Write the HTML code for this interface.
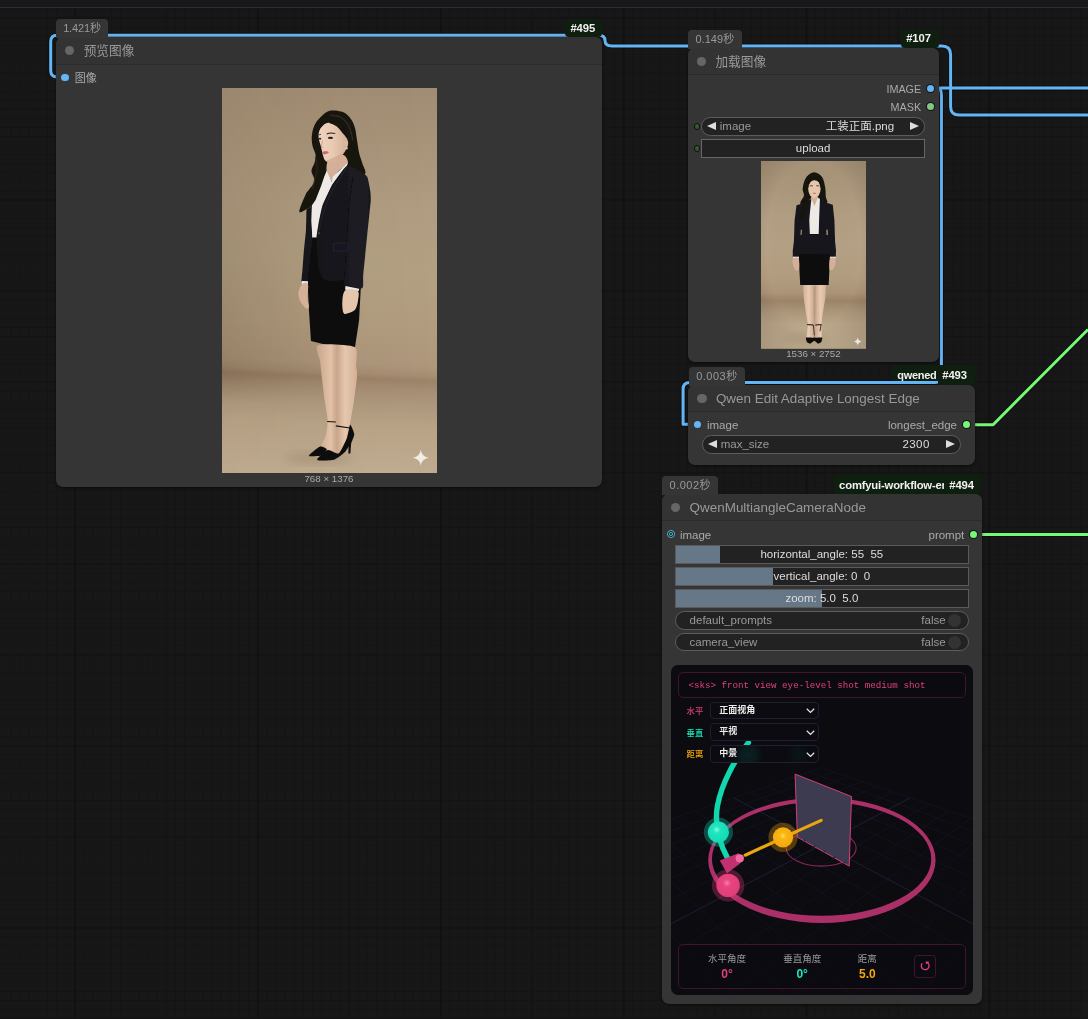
<!DOCTYPE html>
<html lang="zh-CN">
<head>
<meta charset="utf-8">
<title>ComfyUI</title>
<style>
*{box-sizing:border-box;margin:0;padding:0}
html,body{width:1088px;height:1019px;overflow:hidden;background:#171717}
body{position:relative;will-change:transform;font-family:"Liberation Sans","Noto Sans CJK SC",sans-serif;color:#aaa;-webkit-font-smoothing:antialiased}
#topbar{position:absolute;left:0;top:0;width:1088px;height:8px;background:#18181a;border-bottom:1px solid #2c2c31;z-index:50}
#grid{position:absolute;left:0;top:8px;width:1088px;height:1011px;
 background-color:#171717;
 background-image:
  linear-gradient(to right,#111 0,#111 1.8px,transparent 1.8px),
  linear-gradient(to right,#141414 0,#141414 1.6px,transparent 1.6px),
  linear-gradient(to bottom,#131313 0,#131313 1.6px,transparent 1.6px),
  linear-gradient(to right,#141414 0,#141414 1px,transparent 1px),
  linear-gradient(to bottom,#141414 0,#141414 1px,transparent 1px);
 background-size:182.9px 182px,182.9px 182px,91px 91px,9.145px 9.1px,9.145px 9.1px;
 background-position:74px 8.7px,165.45px 8.7px,74px 8.7px,74.4px 9.9px,74.4px 9.9px}
#links{position:absolute;left:0;top:0;width:1088px;height:1019px;z-index:1}
.node{position:absolute;background:#353535;border-radius:7px;z-index:2;box-shadow:0 1px 3px rgba(0,0,0,.55)}
.node .title{position:absolute;left:0;top:0;right:0;height:27.4px;background:#333;border-radius:7px 7px 0 0;border-bottom:1px solid #2b2b2b}
.node .tdot{position:absolute;left:9.1px;top:9px;width:9.1px;height:9.1px;border-radius:50%;background:#666}
.node .ttext{position:absolute;left:27.5px;top:0;height:27px;line-height:28.6px;font-size:12.7px;color:#999;white-space:nowrap}
.badge{position:absolute;height:18.1px;line-height:17.4px;font-size:11px;white-space:nowrap;z-index:3}
.badge.time{background:#353535;color:#999;line-height:19.4px;border-radius:4px 4px 0 0;padding:0 7px}
.badge.id{background:#0f1f0f;color:#f0f0f0;font-weight:bold;border-radius:4px;padding:0 5px;text-align:center;font-size:11.3px;letter-spacing:-.1px;line-height:19.6px}
.slot{position:absolute;font-size:11.5px;line-height:14px;height:14px;color:#aaa;white-space:nowrap}
.dot{position:absolute;width:7.4px;height:7.4px;border-radius:50%}
.dot.o{width:7px;height:7px;margin:.2px 0 0 .2px}
.dot.o{box-shadow:0 0 0 1px #151515}
.w{position:absolute;height:18.7px;background:#222;border:1px solid #5c5c5c;font-size:11.5px;line-height:16px;color:#ddd;white-space:nowrap}
.w.pill{border-radius:9.4px}
.w .l{position:absolute;left:17.5px;top:0;color:#999}
.w .v{position:absolute;right:30px;top:0;color:#ddd}
.w .al,.w .ar{position:absolute;top:3.75px;width:0;height:0;border-top:4.6px solid transparent;border-bottom:4.6px solid transparent}
.w .al{left:4.6px;border-right:9px solid #ddd}
.w .ar{right:4.9px;border-left:9px solid #ddd}
.cap{position:absolute;font-size:9.75px;margin-top:-.7px;color:#aaa;text-align:center;white-space:nowrap;line-height:11px}

.wdot{position:absolute;left:5.85px;width:6.6px;height:6.6px;border-radius:50%;border:1px solid #0d0f0d;background:#2e5e2e}
.w.btn{border-color:#666;border-radius:0}
.w.sl{border-radius:0;border-color:#5a5a5a;text-align:center;overflow:hidden}
.w.sl .fill{position:absolute;left:0;top:0;bottom:0;background:#678;}
.w.sl .c{position:relative}
.w.tg .l{left:13.5px}
.w.tg .v{right:22px;color:#999}
.w.tg .knob{position:absolute;right:6.3px;top:1.85px;width:13px;height:13px;border-radius:50%;background:#333}
.ring{position:absolute;width:8.6px;height:8.6px;border-radius:50%;border:1.25px solid #5ab4e2;background:radial-gradient(circle,#2c4a12 0,#2c4a12 .7px,#4c9fb0 1.1px,#4c9fb0 1.9px,#0e1114 2.3px,#0e1114 3.2px)}

.pbox{position:absolute;border:1px solid #41152c;border-radius:5px;background:rgba(12,10,16,.6);font-family:"Liberation Mono","DejaVu Sans Mono",monospace;font-size:9.2px;color:#e0407f;line-height:26px;white-space:nowrap}
.pbox span{position:absolute;left:9px;top:0}
.slab{position:absolute;font-size:8.4px;line-height:15px;font-weight:500;white-space:nowrap}
.ssel{position:absolute;width:109.1px;height:17.7px;border:1px solid #1f1f31;border-radius:4px;background:#0b0b11;overflow:hidden}
.ssel b{position:absolute;left:8.6px;top:0;font-size:9px;line-height:15.5px;color:#ececec;white-space:nowrap}
.ibox{position:absolute;border:1px solid #41152c;border-radius:5px;background:rgba(11,11,16,.75)}
.icol{position:absolute;top:0;width:60px;text-align:center}
.icol .il{position:absolute;left:0;right:0;top:7.7px;font-size:9.5px;line-height:12px;color:#999;white-space:nowrap}
.icol .iv{position:absolute;left:0;right:0;top:21.5px;font-size:12px;line-height:14px;font-weight:bold;white-space:nowrap}
.rbtn{position:absolute;width:22px;height:22.4px;border:1.2px solid #41162d;border-radius:3.5px;background:#0b0a10}
.rbtn svg{position:absolute}
.ttext.lat{font-size:13.45px}
.slot.up{font-size:10.8px}
.w .v.num{letter-spacing:.4px}
.slot.cjk{font-size:11px}
</style>
</head>
<body>
<div id="grid"></div>
<div id="topbar"></div>
<svg id="links" width="1088" height="1019" viewBox="0 0 1088 1019" fill="none" stroke-linejoin="round">
<path d="M57 76.9 Q50.7 76.9 50.7 70.5 V41.5 Q50.7 35.2 57 35.2 H599 Q605 35.2 605 40.5 Q605 45.9 612 45.9 H942 Q950.6 45.9 950.6 54.5 V106.5 Q950.6 115 959 115 H1088" stroke="#0c0c0c" stroke-opacity=".6" stroke-width="5"/>
<path d="M938.8 88.1 H1088" stroke="#0c0c0c" stroke-opacity=".6" stroke-width="5"/>
<path d="M938.8 88.1 Q941.4 89 941.4 96 V376 Q941.4 382.5 935 382.5 H690 Q683.1 382.5 683.1 389 V424.3 H689" stroke="#0c0c0c" stroke-opacity=".6" stroke-width="5"/>
<path d="M975 424.7 H993.1 L1088 329.5" stroke="#0c0c0c" stroke-opacity=".6" stroke-width="5"/>
<path d="M981.5 534.4 H1088" stroke="#0c0c0c" stroke-opacity=".6" stroke-width="5"/>
<path d="M57 76.9 Q50.7 76.9 50.7 70.5 V41.5 Q50.7 35.2 57 35.2 H599 Q605 35.2 605 40.5 Q605 45.9 612 45.9 H942 Q950.6 45.9 950.6 54.5 V106.5 Q950.6 115 959 115 H1088" stroke="#64B5F6" stroke-width="3"/>
<path d="M938.8 88.1 H1088" stroke="#64B5F6" stroke-width="3"/>
<path d="M938.8 88.1 Q941.4 89 941.4 96 V376 Q941.4 382.5 935 382.5 H690 Q683.1 382.5 683.1 389 V424.3 H689" stroke="#64B5F6" stroke-width="3"/>
<path d="M975 424.7 H993.1 L1088 329.5" stroke="#77f777" stroke-width="3"/>
<path d="M981.5 534.4 H1088" stroke="#77f777" stroke-width="3"/>
</svg>

<!-- ===== Node #495 预览图像 ===== -->
<div class="badge time" style="left:56.2px;top:19.2px;width:51.6px;height:19px;padding:0;text-align:center;letter-spacing:-.15px">1.421秒</div>
<div class="badge id" style="left:564.8px;top:18.6px;width:37.5px;padding:0 1.6px 0 0">#495</div>
<div class="node" id="n495" style="left:56.2px;top:37.2px;width:546.1px;height:449.7px">
  <div class="title"><span class="tdot"></span><span class="ttext">预览图像</span></div>
  <span class="dot" style="left:5.1px;top:36.5px;background:#64B5F6"></span>
  <span class="slot cjk" style="left:18.6px;top:33.9px">图像</span>
  <div class="photo" style="position:absolute;left:165.7px;top:50.6px;width:215.4px;height:385.3px"><svg width="215.4" height="385.3" viewBox="222 88 215 385" preserveAspectRatio="none" style="display:block;position:absolute;left:0;top:0">
<defs>
<linearGradient id="b1w" gradientUnits="userSpaceOnUse" x1="329.5" y1="88" x2="312.3" y2="473">
<stop offset="0" stop-color="#a18d73"/><stop offset=".3" stop-color="#b09c80"/><stop offset=".45" stop-color="#b3a083"/><stop offset=".62" stop-color="#b29c7f"/><stop offset=".71" stop-color="#ae977b"/><stop offset=".735" stop-color="#a68e73"/><stop offset=".748" stop-color="#9d8368"/><stop offset=".765" stop-color="#a38b70"/><stop offset=".8" stop-color="#ab957a"/><stop offset=".87" stop-color="#b8a387"/><stop offset="1" stop-color="#c0ac90"/>
</linearGradient>
<linearGradient id="b1h" x1="0" y1="0" x2="1" y2="0">
<stop offset="0" stop-color="#1a0f00" stop-opacity="1"/><stop offset=".6" stop-color="#1a0f00" stop-opacity=".12"/><stop offset="1" stop-color="#1a0f00" stop-opacity="0"/>
</linearGradient>
<linearGradient id="b1m" x1="0" y1="0" x2="0" y2="1">
<stop offset="0" stop-color="#fff" stop-opacity=".05"/><stop offset=".45" stop-color="#fff" stop-opacity=".12"/><stop offset=".7" stop-color="#fff" stop-opacity=".15"/><stop offset=".75" stop-color="#fff" stop-opacity=".16"/><stop offset=".82" stop-color="#fff" stop-opacity=".03"/><stop offset="1" stop-color="#fff" stop-opacity=".02"/>
</linearGradient>
<mask id="m1" maskUnits="userSpaceOnUse" x="222" y="88" width="215" height="385"><rect x="222" y="88" width="215" height="385" fill="url(#b1m)"/></mask>
<linearGradient id="face1" x1="0" y1="0" x2="1" y2="0"><stop offset="0" stop-color="#f0d4c0"/><stop offset=".5" stop-color="#e8c8b0"/><stop offset="1" stop-color="#d4ae96"/></linearGradient>
<linearGradient id="blz1" x1="0" y1="0" x2="1" y2="0"><stop offset="0" stop-color="#131318"/><stop offset=".55" stop-color="#19191f"/><stop offset=".9" stop-color="#1e1e25"/><stop offset="1" stop-color="#16161b"/></linearGradient>
<filter id="f1" x="-5%" y="-5%" width="110%" height="110%"><feGaussianBlur stdDeviation=".45"/></filter>
<filter id="f1b" x="-20%" y="-20%" width="140%" height="140%"><feGaussianBlur stdDeviation="5"/></filter>
<linearGradient id="leg1" x1="0" y1="0" x2="1" y2="0"><stop offset="0" stop-color="#c9a58b"/><stop offset=".35" stop-color="#e2c2a8"/><stop offset=".5" stop-color="#c8a48a"/><stop offset=".7" stop-color="#e6c8af"/><stop offset="1" stop-color="#d2b096"/></linearGradient>
</defs>
<rect x="222" y="88" width="215" height="385" fill="url(#b1w)"/>
<rect x="222" y="88" width="215" height="385" fill="url(#b1h)" mask="url(#m1)"/>
<ellipse cx="318" cy="458" rx="34" ry="6" fill="#5a4530" opacity=".16" filter="url(#f1b)"/>
<g filter="url(#f1)">
<path d="M330.5 110.6 C333.9 110.1 339.3 110.7 342.7 112.1 C346.0 113.6 348.7 116.5 350.8 119.2 C352.8 121.9 353.8 124.8 354.8 128.3 C355.8 131.9 356.1 136.4 356.8 140.4 C357.5 144.5 358.0 148.9 358.8 152.6 C359.7 156.3 360.9 159.2 361.9 162.7 C362.9 166.2 366.4 171.5 364.9 173.8 C363.4 176.2 361.5 171.6 352.8 176.8 C344.0 182.1 320.1 199.8 312.3 205.2 C304.6 210.6 308.5 208.2 306.3 209.2 C304.1 210.3 299.4 213.8 299.2 211.4 C299.0 209.1 303.6 198.8 305.3 195.0 C306.9 191.3 307.8 191.3 309.3 189.0 C310.8 186.6 314.0 183.9 314.4 180.9 C314.7 177.9 311.3 173.8 311.3 170.8 C311.3 167.7 313.7 165.4 314.4 162.7 C315.0 160.0 315.7 157.5 315.4 154.6 C315.0 151.7 312.9 148.9 312.3 145.5 C311.7 142.1 311.3 138.1 311.8 134.4 C312.3 130.7 313.6 126.5 315.4 123.3 C317.1 120.1 319.9 117.3 322.4 115.2 C325.0 113.1 327.2 111.1 330.5 110.6Z" fill="#17120f"/>
<path d="M328.5 159.7 C331.2 156.6 339.5 153.9 342.7 154.6 C345.9 155.3 348.4 161.0 347.7 163.7 C347.0 166.4 341.5 167.7 338.6 170.8 C335.8 173.8 332.6 181.6 330.5 181.9 C328.5 182.2 326.8 176.5 326.5 172.8 C326.2 169.1 325.8 162.7 328.5 159.7Z" fill="#d3b097"/>
<path d="M325.5 123.5 C323.9 124.3 321.6 126.5 320.4 128.3 C319.2 130.1 318.6 132.4 318.4 134.4 C318.2 136.4 318.6 138.5 319.0 140.4 C319.4 142.4 320.2 144.2 320.7 146.3 C321.3 148.4 321.5 150.7 322.2 153.1 C323.0 155.4 323.6 159.0 325.0 160.5 C326.4 161.9 328.3 162.2 330.5 161.9 C332.8 161.6 336.2 160.7 338.6 158.8 C341.0 157.0 343.3 153.5 344.9 151.1 C346.4 148.7 347.6 146.6 347.9 144.5 C348.2 142.4 347.6 140.3 346.7 138.4 C345.8 136.6 344.4 135.4 342.7 133.4 C341.0 131.4 338.7 128.2 336.6 126.5 C334.5 124.8 331.9 123.6 330.0 123.1 C328.2 122.5 327.1 122.6 325.5 123.5Z" fill="url(#face1)"/>
<ellipse cx="345.9" cy="143.0" rx="1.6" ry="2.6" fill="#e0b8a0"/>
<circle cx="346.5" cy="148.3" r="1.1" fill="#cfd3d6"/>
<path d="M325.5 160.7 C325.5 161.2 328.3 162.2 330.5 161.9 C332.7 161.6 336.3 160.6 338.6 158.8 C340.9 157.1 344.2 152.2 344.2 151.6 C344.2 150.9 340.9 153.9 338.6 155.1 C336.3 156.3 332.7 157.7 330.5 158.6 C328.3 159.6 325.5 160.1 325.5 160.7Z" fill="#c89e86" opacity=".55"/>
<path d="M326.5 133.9 Q330.5 132.2 335.1 133.6" stroke="#2a1f1a" stroke-width="1" fill="none"/>
<path d="M318.6 134.9 L320.9 134.2" stroke="#2a1f1a" stroke-width=".8" fill="none"/>
<ellipse cx="330.3" cy="137.9" rx="2.6" ry="1.1" fill="#2a1c18"/>
<ellipse cx="319.9" cy="138.6" rx="1.2" ry=".9" fill="#2a1c18"/>
<path d="M322.4 140.4 L321.0 146.7 L323.5 147.5" stroke="#c79a84" stroke-width=".8" fill="none"/>
<path d="M322.2 151.8 C322.7 151.3 324.4 151.0 325.5 151.1 C326.6 151.1 328.7 151.7 328.7 152.2 C328.7 152.7 326.5 153.9 325.5 154.1 C324.5 154.3 323.2 154.0 322.6 153.6 C322.1 153.2 321.8 152.2 322.2 151.8Z" fill="#c9695f"/>
<path d="M329.5 122.8 C329.2 123.4 334.3 124.1 336.6 125.8 C338.9 127.5 341.5 130.8 343.2 132.9 C344.9 134.9 346.5 138.3 346.7 137.9 C347.0 137.5 346.0 133.0 344.7 130.3 C343.3 127.6 341.2 123.0 338.6 121.7 C336.1 120.5 329.9 122.1 329.5 122.8Z" fill="#17120f"/>
<path d="M306.1 209.7 L312.3 205.2 L315.4 199.1 L311.8 205.2 L311.3 220.3 L312.3 237.5 L316.4 238.5 L317.4 281.0 L301.2 281.0 L302.2 270.9 L303.7 250.7 L305.8 230.4 L306.3 210.2Z" fill="#18181e"/>
<path d="M346.7 163.5 L332.6 176.8 L331.5 182.1 L326.5 170.8 L324.0 176.8 L320.9 185.9 L315.4 200.0 L311.8 205.2 L311.3 220.3 L312.1 237.7 L316.2 237.7 L318.6 223.4 L322.4 205.2 L329.5 190.0 L332.6 183.9 L346.7 166.9Z" fill="#ece9e6"/>
<path d="M312.3 237.5 L307.3 280.0 L308.8 310.3 L310.8 340.7 L332.6 346.2 L354.8 346.9 L358.8 320.4 L360.4 290.1 L361.9 280.0 L344.7 279.0 L316.4 237.5Z" fill="#0d0d10"/>
<path d="M317.9 344.7 C313.9 346.4 319.5 357.4 319.9 360.9 C320.3 364.4 320.9 370.4 321.4 375.0 C322.0 379.6 323.8 395.0 324.5 400.3 C325.2 405.6 327.4 416.4 327.5 420.5 C327.6 424.6 326.3 432.6 325.5 435.7 C324.7 438.7 320.3 445.2 320.4 446.8 C320.5 448.4 325.7 448.9 326.5 449.3 C327.3 449.7 326.1 449.9 327.5 450.3 C328.9 450.8 336.4 455.0 338.6 453.4 C340.9 451.8 345.4 440.2 346.7 436.7 C348.0 433.2 348.9 427.8 349.7 423.5 C350.6 419.3 353.0 405.9 353.8 400.3 C354.6 394.6 356.6 379.0 356.8 375.0 C357.1 371.0 356.1 369.2 355.8 365.9 C355.5 362.6 358.7 349.2 354.3 346.7 C349.9 344.3 321.9 343.1 317.9 344.7Z" fill="url(#leg1)"/>
<path d="M346.7 165.7 C349.3 164.4 356.8 169.7 358.8 170.8 C360.9 171.9 365.8 174.8 366.9 176.8 C368.0 178.9 369.6 188.7 370.0 191.0 C370.3 193.3 370.6 197.7 370.5 200.1 C370.4 202.5 369.3 211.7 369.0 215.3 C368.6 218.8 367.3 231.5 366.9 235.5 C366.5 239.5 365.3 251.7 364.9 255.7 C364.5 259.8 363.2 272.7 362.9 275.9 C362.6 279.2 363.7 287.2 361.9 288.1 C360.1 289.0 346.5 285.9 344.7 285.1 C342.9 284.2 345.1 280.4 343.7 280.0 C342.3 279.6 332.7 281.2 330.5 281.0 C328.4 280.8 323.7 279.2 322.4 278.0 C321.2 276.8 319.0 271.6 318.4 268.9 C317.8 266.1 317.1 253.8 316.9 250.7 C316.7 247.5 316.2 240.3 316.4 237.5 C316.5 234.8 317.8 226.6 318.4 223.4 C319.0 220.1 321.3 208.5 322.4 205.2 C323.6 201.8 328.5 192.1 329.5 190.0 C330.5 187.9 330.8 186.4 332.6 183.9 C334.3 181.5 344.1 167.0 346.7 165.7Z" fill="url(#blz1)"/>
<path d="M352.8 176.8 C352.2 180.7 350.1 192.9 349.2 200.1 C348.4 207.4 348.3 211.9 347.7 220.3 C347.2 228.8 346.5 240.9 345.9 250.7 C345.3 260.4 344.2 274.3 343.9 279.0" fill="none" stroke="#0e0e14" stroke-width=".9"/>
<path d="M346.7 166.9 C345.4 169.1 341.5 175.0 338.6 179.9 C335.8 184.7 332.2 190.2 329.5 196.1 C326.8 202.0 324.3 209.2 322.4 215.3 C320.6 221.3 319.2 229.6 318.6 232.5" fill="none" stroke="#2b2b36" stroke-width=".8"/>
<path d="M333.1 243.3 L347.7 242.6 L348.1 250.5 L333.6 251.3Z" fill="#191921" stroke="#2a2a34" stroke-width=".6"/>
<circle cx="318.9" cy="233.2" r="1.2" fill="#3a3a44"/>
<path d="M329.5 115.2 C331.4 115.5 337.4 115.3 340.6 117.2 C343.8 119.0 346.7 122.4 348.7 126.3 C350.8 130.2 352.1 138.1 352.8 140.4" fill="none" stroke="#3b322c" stroke-width="1.6" opacity=".7"/>
<path d="M315.4 156.6 C315.6 158.6 317.1 164.9 316.9 168.8 C316.7 172.6 315.1 176.5 314.4 179.9 C313.6 183.2 312.7 187.5 312.3 189.0" fill="none" stroke="#332a25" stroke-width="1.4" opacity=".7"/>
<path d="M301.7 280.8 L307.8 281.2 L307.8 284.2 L301.7 284.0Z" fill="#ece9e6"/>
<path d="M302.0 284.0 C300.4 285.5 298.4 290.1 298.2 293.1 C298.0 296.2 299.4 299.7 300.7 302.2 C302.1 304.8 304.9 307.8 306.3 308.5 C307.6 309.2 308.6 308.0 308.8 306.3 C309.0 304.6 307.4 301.9 307.3 298.2 C307.1 294.5 308.7 286.6 307.8 284.2 C306.9 281.9 303.6 282.6 302.0 284.0Z" fill="#d3b097"/>
<path d="M345.2 285.9 L359.0 288.5 L358.5 290.9 L344.9 289.5Z" fill="#ece9e6"/>
<path d="M345.5 289.9 C343.0 291.5 342.5 296.4 342.2 300.2 C341.8 304.0 342.2 310.4 343.2 312.6 C344.1 314.7 345.8 313.5 347.7 313.0 C349.7 312.5 353.1 311.6 354.8 309.5 C356.5 307.4 357.4 303.4 357.8 300.2 C358.3 297.1 359.4 292.4 357.3 290.7 C355.3 289.0 348.0 288.3 345.5 289.9Z" fill="#e6c6ad"/>
<path d="M308.8 455.1 C309.6 454.1 318.1 446.9 319.9 446.3 C321.7 445.7 326.2 448.0 326.5 448.8 C326.7 449.7 323.9 454.2 322.4 454.9 C321.0 455.6 313.7 455.9 312.3 455.9 C311.0 455.9 308.0 456.0 308.8 455.1Z" fill="#0b0b0d"/>
<path d="M316.9 459.1 C317.4 458.1 325.3 450.4 327.5 449.8 C329.7 449.2 336.7 454.3 338.6 453.1 C340.5 451.8 345.6 440.5 346.7 437.7 C347.8 434.8 349.2 424.9 349.9 424.5 C350.7 424.1 353.8 432.0 354.0 433.6 C354.2 435.3 352.7 438.9 351.8 440.7 C350.8 442.5 346.4 450.0 344.7 451.8 C343.0 453.7 336.8 458.3 334.6 459.1 C332.4 460.0 324.2 460.1 322.4 460.1 C320.7 460.1 316.4 460.2 316.9 459.1Z" fill="#0b0b0d"/>
<path d="M348.5 439.7 L351.2 439.7 L350.1 453.1 L348.2 453.1Z" fill="#0b0b0d"/>
<path d="M327.0 421.2 L335.6 421.7 M335.6 425.6 L349.7 427.8" stroke="#111" stroke-width="1.1"/>
</g>
<path d="M420.4 449.5 Q421.4 456.5 428.4 457.5 Q421.4 458.5 420.4 465.5 Q419.4 458.5 412.4 457.5 Q419.4 456.5 420.4 449.5Z" fill="#f3efe9" opacity=".95"/>
</svg></div>
  <div class="cap" style="left:222.8px;top:436.5px;width:100px">768 × 1376</div>
</div>

<!-- ===== Node #107 加载图像 ===== -->
<div class="badge time" style="left:688px;top:30px;width:53.6px;height:19px;padding:0;text-align:center;letter-spacing:.05px">0.149秒</div>
<div class="badge id" style="left:900.8px;top:29.5px;width:37.8px;height:18.3px;line-height:17.9px;padding:0 2.4px 0 0">#107</div>
<div class="node" id="n107" style="left:687.9px;top:48px;width:250.9px;height:314.1px">
  <div class="title"><span class="tdot"></span><span class="ttext">加载图像</span></div>
  <span class="slot up" style="right:17.6px;top:34px">IMAGE</span>
  <span class="dot o" style="left:238.8px;top:36.4px;background:#64B5F6"></span>
  <span class="slot up" style="right:17.6px;top:51.6px">MASK</span>
  <span class="dot o" style="left:238.8px;top:54.7px;background:#81C784"></span>
  <span class="wdot" style="top:75.2px"></span>
  <div class="w pill" style="left:13.4px;top:69.1px;width:223.8px"><i class="al"></i><span class="l">image</span><span class="v">工装正面.png</span><i class="ar"></i></div>
  <span class="wdot" style="top:97px"></span>
  <div class="w btn" style="left:13px;top:91.2px;width:224.5px;text-align:center">upload</div>
  <div class="photo" style="position:absolute;left:73.1px;top:113px;width:105.1px;height:187.6px"><svg width="105.1" height="187.8" viewBox="761 160.8 105.1 187.8" style="display:block;position:absolute;left:0;top:0">
<defs>
<linearGradient id="b2w" x1="0" y1="0" x2="0" y2="1">
<stop offset="0" stop-color="#a49176"/><stop offset=".3" stop-color="#b29e82"/><stop offset=".45" stop-color="#b5a185"/><stop offset=".62" stop-color="#b39d80"/><stop offset=".7" stop-color="#ac9579"/><stop offset=".745" stop-color="#9c8468"/><stop offset=".8" stop-color="#ab967a"/><stop offset=".87" stop-color="#b9a588"/><stop offset="1" stop-color="#c1ae91"/>
</linearGradient>
<radialGradient id="b2v" cx=".5" cy=".45" r=".75"><stop offset="0" stop-color="#fff" stop-opacity=".05"/><stop offset=".6" stop-color="#000" stop-opacity="0"/><stop offset="1" stop-color="#2a2014" stop-opacity=".16"/></radialGradient>
<filter id="f2" x="-5%" y="-5%" width="110%" height="110%"><feGaussianBlur stdDeviation=".35"/></filter>
<filter id="f2b" x="-30%" y="-30%" width="160%" height="160%"><feGaussianBlur stdDeviation="3"/></filter>
<linearGradient id="leg2" x1="0" y1="0" x2="1" y2="0"><stop offset="0" stop-color="#d4b197"/><stop offset=".25" stop-color="#e8cbb3"/><stop offset=".47" stop-color="#caa78d"/><stop offset=".53" stop-color="#caa78d"/><stop offset=".75" stop-color="#e8cbb3"/><stop offset="1" stop-color="#d4b197"/></linearGradient>
</defs>
<rect x="761" y="160.8" width="105.1" height="187.8" fill="url(#b2w)"/>
<rect x="761" y="160.8" width="105.1" height="187.8" fill="url(#b2v)"/>
<ellipse cx="805" cy="338" rx="22" ry="5" fill="#7a6248" opacity=".15" filter="url(#f2b)"/>
<g filter="url(#f2)">
<path d="M814.1 172.0 C816.8 171.9 820.2 174.1 822.1 176.8 C824.0 179.5 824.7 184.7 825.3 188.0 C825.9 191.3 825.5 194.1 825.8 196.5 C826.2 198.9 828.2 201.3 827.2 202.4 C826.2 203.4 823.0 202.8 820.0 202.9 C817.0 203.0 811.9 200.7 809.3 202.9 C806.7 205.1 806.1 213.3 804.5 216.2 C802.9 219.2 800.7 220.6 799.7 220.5 C798.7 220.4 797.9 217.6 798.4 215.7 C799.0 213.8 802.6 211.4 802.9 209.3 C803.2 207.2 800.1 205.2 800.2 202.9 C800.4 200.6 803.6 197.9 804.0 195.4 C804.4 193.0 802.3 191.0 802.7 188.0 C803.1 185.0 804.2 180.0 806.1 177.3 C808.0 174.7 811.4 172.1 814.1 172.0Z" fill="#17120f"/>
<path d="M811.2 196.5 L818.1 196.5 L818.9 201.8 L814.4 206.1 L810.2 201.8Z" fill="#d3b097"/>
<ellipse cx="814.4" cy="188.5" rx="6.2" ry="9.4" fill="#e6c6ad"/>
<path d="M808.2 188.0 C808.2 187.5 808.3 181.3 809.3 179.5 C810.3 177.6 812.3 176.7 814.1 176.8 C815.9 176.9 818.9 178.1 820.0 180.0 C821.1 181.9 821.0 187.6 820.8 188.0 C820.6 188.3 820.0 183.5 818.9 182.1 C817.8 180.8 815.6 179.9 814.1 180.0 C812.6 180.1 810.8 181.3 809.8 182.7 C808.9 184.0 808.3 188.5 808.2 188.0Z" fill="#17120f"/>
<path d="M809.8 185.6 L813.0 185.6 M816.2 185.6 L819.4 185.6" stroke="#3a2a22" stroke-width=".8"/>
<path d="M812.8 193.1 L816.0 193.1" stroke="#c0756a" stroke-width="1"/>
<path d="M809.3 199.7 L814.4 206.1 L820.0 198.6 L819.1 234.0 L809.8 234.5Z" fill="#ece9e6"/>
<path d="M809.3 199.7 L811.4 198.1 L814.4 206.1 L817.8 197.8 L820.0 198.6 L815.7 211.4 L814.4 209.3 L813.0 211.4Z" fill="#ece9e6"/>
<path d="M807.2 233.8 L822.1 233.8 L830.1 253.2 L828.7 284.8 L800.2 284.8 L798.6 253.2Z" fill="#0d0d10"/>
<path d="M803.2 284.8 L826.1 284.8 L825.3 298.0 L822.6 314.0 L821.3 324.6 L821.9 338.5 L806.1 338.5 L808.0 324.6 L806.1 314.0 L803.8 298.0Z" fill="url(#leg2)"/>
<path d="M813.7 286.3 L815.6 286.3 L815.3 314.0 L814.7 324.6 L814.2 324.6 L813.8 314.0Z" fill="#b39a7e"/>
<path d="M811.4 198.6 L804.5 202.9 L796.5 205.0 L794.6 220.0 L793.9 241.3 L792.8 250.0 L792.8 256.6 L798.9 256.6 L799.2 253.2 L820.0 253.2 L824.2 254.5 L829.6 253.2 L830.0 256.6 L835.8 256.6 L836.0 250.0 L835.1 241.3 L834.4 220.0 L832.8 204.5 L824.2 201.8 L820.0 198.1 L819.1 220.0 L818.7 234.4 L814.1 235.4 L809.8 234.4 L809.1 220.0Z" fill="#18181e"/>
<path d="M802.9 201.8 C803.9 200.8 807.7 201.3 808.2 202.9 C808.8 204.5 807.0 208.8 806.1 211.4 C805.2 214.1 804.1 217.4 802.9 218.9 C801.8 220.4 799.9 221.0 799.2 220.5 C798.5 220.0 798.1 217.6 798.6 215.7 C799.2 213.8 801.7 211.6 802.4 209.3 C803.1 207.0 801.9 202.9 802.9 201.8Z" fill="#17120f"/>
<path d="M800.8 229.6 L801.8 229.6 L801.6 234.9 L800.6 234.9Z" fill="#b59f82"/>
<path d="M826.4 229.6 L827.6 229.6 L827.9 234.9 L826.6 234.9Z" fill="#b59f82"/>
<rect x="793.0" y="256.6" width="5.9" height="1.6" fill="#ece9e6"/>
<rect x="829.9" y="256.6" width="5.8" height="1.6" fill="#ece9e6"/>
<path d="M793.3 258.3 C792.3 259.2 792.4 262.0 792.8 263.9 C793.1 265.8 794.4 268.8 795.4 269.7 C796.5 270.6 798.3 271.1 798.9 269.2 C799.4 267.3 799.6 260.1 798.6 258.3 C797.7 256.5 794.3 257.4 793.3 258.3Z" fill="#d3b097"/>
<path d="M830.0 258.3 C829.1 260.1 829.1 267.3 829.6 269.2 C830.0 271.0 831.8 270.3 832.8 269.4 C833.7 268.5 835.0 265.7 835.4 263.9 C835.8 262.0 836.0 259.2 835.1 258.3 C834.2 257.4 830.9 256.5 830.0 258.3Z" fill="#d3b097"/>
<path d="M806.1 337.4 C806.8 337.0 813.3 337.6 814.1 337.4 C814.9 337.2 814.4 335.3 814.4 335.3 C814.5 335.3 814.1 337.2 814.9 337.4 C815.6 337.6 821.5 337.0 822.1 337.4 C822.7 337.9 821.7 341.1 821.3 341.7 C820.8 342.3 818.5 343.4 817.8 343.3 C817.2 343.2 815.2 340.6 814.4 340.6 C813.7 340.6 811.1 343.2 810.4 343.3 C809.6 343.4 807.4 342.3 807.0 341.7 C806.5 341.1 805.4 337.9 806.1 337.4Z" fill="#0b0b0d"/>
<path d="M807.2 324.4 L813.4 324.8 M815.3 324.8 L821.5 324.4" stroke="#111" stroke-width="1"/>
<path d="M813.4 324.8 L814.4 335.3 M821.0 324.8 L820.0 331.0" stroke="#111" stroke-width=".8"/>
</g>
<path d="M857.8 337.2 Q858.4 340.6 861.8 341.2 Q858.4 341.8 857.8 345.2 Q857.2 341.8 853.8 341.2 Q857.2 340.6 857.8 337.2Z" fill="#f3efe9" opacity=".9"/>
</svg></div>
  <div class="cap" style="left:75.5px;top:301px;width:100px">1536 × 2752</div>
</div>

<!-- ===== Node #493 Qwen Edit Adaptive Longest Edge ===== -->
<div class="badge time" style="left:688.8px;top:367px;width:56.2px;height:19px;padding:0;text-align:center;letter-spacing:.5px">0.003秒</div>
<div class="badge id" style="left:891.5px;top:365px;width:48px;height:16.3px;line-height:21.4px;padding:0;border-radius:4px 0 0 4px"><span style="position:absolute;left:5.8px;top:0;font-size:11px;letter-spacing:-.3px">qwened</span></div><div class="badge id" style="left:938.2px;top:365px;width:36.6px;height:19.6px;line-height:21.4px;padding:0;border-radius:0 4px 4px 0"><span style="position:absolute;right:7.8px;top:0">#493</span></div>
<div class="node" id="n493" style="left:688.4px;top:384.6px;width:286.6px;height:80px">
  <div class="title"><span class="tdot"></span><span class="ttext lat">Qwen Edit Adaptive Longest Edge</span></div>
  <span class="dot" style="left:5.4px;top:36.4px;background:#64B5F6"></span>
  <span class="slot" style="left:18.6px;top:33.3px">image</span>
  <span class="slot" style="right:18px;top:33.3px">longest_edge</span>
  <span class="dot o" style="left:274.4px;top:36.4px;background:#77f777"></span>
  <div class="w pill" style="left:13.8px;top:50.5px;width:258.5px"><i class="al"></i><span class="l">max_size</span><span class="v num">2300</span><i class="ar"></i></div>
</div>

<!-- ===== Node #494 QwenMultiangleCameraNode ===== -->
<div class="badge time" style="left:662.2px;top:475.8px;width:56.3px;height:19px;padding:0;text-align:center;letter-spacing:.5px">0.002秒</div>
<div class="badge id" style="left:834.1px;top:474.2px;width:147.2px;height:19.9px;line-height:22.4px;padding:0;text-align:left"><span style="position:absolute;left:5px;top:0;width:105px;overflow:hidden;display:block;height:19.9px;letter-spacing:-.2px">comfyui-workflow-enhanced</span><span style="position:absolute;right:7.3px;top:0">#494</span></div>
<div class="node" id="n494" style="left:662.1px;top:494.1px;width:320.1px;height:510.3px">
  <div class="title"><span class="tdot"></span><span class="ttext lat">QwenMultiangleCameraNode</span></div>
  <span class="ring" style="left:4.55px;top:35.6px"></span>
  <span class="slot" style="left:17.8px;top:33.5px">image</span>
  <span class="slot" style="right:17.9px;top:33.5px">prompt</span>
  <span class="dot o" style="left:307.8px;top:36.5px;background:#77f777"></span>
  <div class="w sl" style="left:13px;top:51.1px;width:293.5px"><i class="fill" style="width:43.9px"></i><span class="c">horizontal_angle: 55&nbsp;&nbsp;55</span></div>
  <div class="w sl" style="left:13px;top:72.8px;width:293.5px"><i class="fill" style="width:97px"></i><span class="c">vertical_angle: 0&nbsp;&nbsp;0</span></div>
  <div class="w sl" style="left:13px;top:94.8px;width:293.5px"><i class="fill" style="width:145.7px"></i><span class="c">zoom: 5.0&nbsp;&nbsp;5.0</span></div>
  <div class="w pill tg" style="left:13px;top:116.8px;width:293.5px"><span class="l">default_prompts</span><span class="v">false</span><i class="knob"></i></div>
  <div class="w pill tg" style="left:13px;top:138.7px;width:293.5px"><span class="l">camera_view</span><span class="v">false</span><i class="knob"></i></div>
  <div id="cam" style="position:absolute;left:9.1px;top:170.8px;width:301.9px;height:330.6px;background:#0b0b10;border-radius:7px;overflow:hidden">
    <svg width="301.9" height="330.6" viewBox="671.2 664.9 301.9 330.6" style="position:absolute;left:0;top:0;display:block">
<defs>
<radialGradient id="gt" cx=".42" cy=".38" r=".7"><stop offset="0" stop-color="#7dfbe3"/><stop offset=".25" stop-color="#1fe6bf"/><stop offset="1" stop-color="#10d8b0"/></radialGradient>
<radialGradient id="ga" cx=".5" cy=".42" r=".7"><stop offset="0" stop-color="#ffe35a"/><stop offset=".22" stop-color="#fbb614"/><stop offset="1" stop-color="#f0a30a"/></radialGradient>
<radialGradient id="gp" cx=".45" cy=".4" r=".7"><stop offset="0" stop-color="#ff78ad"/><stop offset=".25" stop-color="#e8447f"/><stop offset="1" stop-color="#dd3b79"/></radialGradient>
<filter id="glow" x="-50%" y="-50%" width="200%" height="200%"><feGaussianBlur stdDeviation="4"/></filter>
</defs>
<g stroke-width="1" fill="none"><path d="M822.1 767.8 L596.1 844.3" stroke="#121220"/><path d="M822.1 767.8 L1048.1 844.3" stroke="#121220"/><path d="M834.6 772.0 L604.9 854.7" stroke="#121220"/><path d="M809.6 772.0 L1039.3 854.7" stroke="#121220"/><path d="M847.8 776.5 L614.6 866.2" stroke="#121220"/><path d="M796.4 776.5 L1029.6 866.2" stroke="#121220"/><path d="M862.0 781.3 L625.3 878.8" stroke="#121220"/><path d="M782.2 781.3 L1018.9 878.8" stroke="#121220"/><path d="M877.1 786.4 L637.2 893.0" stroke="#121220"/><path d="M767.1 786.4 L1007.0 893.0" stroke="#121220"/><path d="M893.2 791.9 L650.6 908.8" stroke="#121220"/><path d="M751.0 791.9 L993.6 908.8" stroke="#121220"/><path d="M910.5 797.8 L665.7 926.7" stroke="#1e1e3a"/><path d="M733.7 797.8 L978.5 926.7" stroke="#1e1e3a"/><path d="M929.1 804.1 L682.8 947.0" stroke="#121220"/><path d="M715.1 804.1 L961.4 947.0" stroke="#121220"/><path d="M949.2 810.8 L702.5 970.3" stroke="#121220"/><path d="M695.0 810.8 L941.7 970.3" stroke="#121220"/><path d="M970.9 818.2 L725.3 997.3" stroke="#121220"/><path d="M673.3 818.2 L918.9 997.3" stroke="#121220"/><path d="M994.4 826.2 L752.0 1028.9" stroke="#121220"/><path d="M649.8 826.2 L892.2 1028.9" stroke="#121220"/><path d="M1020.1 834.8 L783.7 1066.5" stroke="#121220"/><path d="M624.1 834.8 L860.5 1066.5" stroke="#121220"/><path d="M1048.1 844.3 L822.1 1112.0" stroke="#121220"/><path d="M596.1 844.3 L822.1 1112.0" stroke="#121220"/></g>
<path fill-rule="evenodd" fill="#ac3068" d="M708.4 860.1a113.7 62.7 0 1 0 227.4 0a113.7 62.7 0 1 0 -227.4 0Z M712.1 858.7a109.7 57 0 1 0 219.4 0a109.7 57 0 1 0 -219.4 0Z"/>
<ellipse cx="821.4" cy="848" rx="35" ry="18" fill="none" stroke="#8a2755" stroke-width="1.1"/>
<path d="M745.4 855.1 L821.4 820.3" stroke="#e9a60d" stroke-width="3.2" stroke-linecap="round"/>
<path d="M795.3 774 L851.7 796.4 L849.4 866 L797.6 837.1Z" fill="#3d3b4f" stroke="#d83c7a" stroke-width="1" stroke-linejoin="round"/>
<path d="M783 837.5 L821.4 820.3" stroke="#e9a60d" stroke-width="3.2" stroke-linecap="round"/>
<path d="M802 842l4-2M812 847.5l4-2M822 853l4-2M832 858.5l4-2M842 864l4-2" stroke="#222030" stroke-width="1"/>
<path d="M748.6 742.5 C736 758 722 782 717.6 806 C715 822 717 838 727.5 857.5" fill="none" stroke="#12d6ae" stroke-width="5.4" stroke-linecap="round"/>
<path d="M720 860.3 L738.5 853.2 L744 857.6 L740 863.6 L727.2 873.2Z" fill="#c3306f"/>
<circle cx="740" cy="858.3" r="4.1" fill="#f06ba2"/>
<circle cx="718.6" cy="832.1" r="14.6" fill="#14d8b0" fill-opacity=".32"/><circle cx="718.6" cy="832.1" r="10.6" fill="url(#gt)"/>
<circle cx="783.2" cy="837.3" r="14.6" fill="#f0a30a" fill-opacity=".32"/><circle cx="783.2" cy="837.3" r="10.1" fill="url(#ga)"/>
<circle cx="728.3" cy="885.3" r="16.2" fill="#dd3b79" fill-opacity=".32"/><circle cx="728.3" cy="885.3" r="11.7" fill="url(#gp)"/>
</svg>
<div class="pbox" style="left:7.2px;top:7.3px;width:287.4px;height:25.6px"><span>&lt;sks&gt; front view eye-level shot medium shot</span></div>
<span class="slab" style="left:15.4px;top:39.2px;color:#e0407f">水平</span>
<div class="ssel" style="left:38.5px;top:36.8px"><b>正面视角</b><svg width="9" height="5.5" viewBox="0 0 9 5.5" style="position:absolute;right:2.8px;top:5.8px"><path d="M.8 .8 L4.5 4.4 L8.2 .8" fill="none" stroke="#e6e6e6" stroke-width="1.25"/></svg></div>
<span class="slab" style="left:15.4px;top:61.0px;color:#14e0b8">垂直</span>
<div class="ssel" style="left:38.5px;top:58.6px"><b>平视</b><svg width="9" height="5.5" viewBox="0 0 9 5.5" style="position:absolute;right:2.8px;top:5.8px"><path d="M.8 .8 L4.5 4.4 L8.2 .8" fill="none" stroke="#e6e6e6" stroke-width="1.25"/></svg></div>
<span class="slab" style="left:15.4px;top:82.6px;color:#f5a80c">距离</span>
<div class="ssel" style="left:38.5px;top:80.2px"><i style="position:absolute;left:26px;top:-2px;width:22px;height:22px;border-radius:50%;background:#12d6ae;opacity:.11;filter:blur(4px)"></i><i style="position:absolute;left:78px;top:-2px;width:18px;height:22px;border-radius:50%;background:#12d6ae;opacity:.05;filter:blur(4px)"></i><b>中景</b><svg width="9" height="5.5" viewBox="0 0 9 5.5" style="position:absolute;right:2.8px;top:5.8px"><path d="M.8 .8 L4.5 4.4 L8.2 .8" fill="none" stroke="#e6e6e6" stroke-width="1.25"/></svg></div>
<div class="ibox" style="left:7.3px;top:279.5px;width:287.2px;height:44.2px">
<div class="icol" style="left:17.5px"><span class="il">水平角度</span><span class="iv" style="color:#e0407f">0°</span></div>
<div class="icol" style="left:92.7px"><span class="il">垂直角度</span><span class="iv" style="color:#14e8c0">0°</span></div>
<div class="icol" style="left:157.9px"><span class="il">距离</span><span class="iv" style="color:#f5a80c">5.0</span></div>
<div class="rbtn" style="left:234.45px;top:10.06px"><svg width="14" height="14" viewBox="0 0 14 14" style="left:3.20px;top:2.84px"><path d="M4.24 4.24 A3.9 3.9 0 1 0 8.4 3.1" fill="none" stroke="#e83e8c" stroke-width="1.25"/><path d="M7.7 2.6 L11.7 2.7 L7.9 5.3Z" fill="#e83e8c"/></svg></div>
</div>
  </div>
</div>

</body>
</html>
